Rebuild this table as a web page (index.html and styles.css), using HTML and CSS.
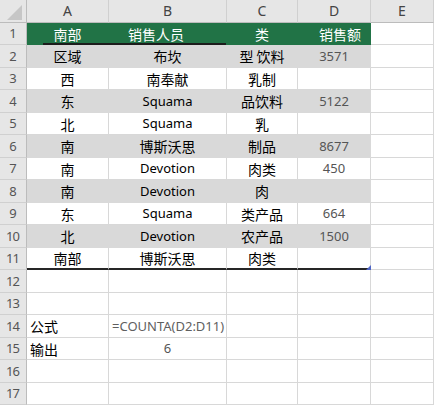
FILE: index.html
```html
<!DOCTYPE html>
<html lang="zh">
<head>
<meta charset="utf-8">
<title>COUNTA</title>
<link rel="stylesheet" href="styles.css">
</head>
<body>
<div class="sheet">
  <div class="row colh h23">
    <div class="cell corner"><svg width="26" height="22" viewBox="0 0 26 22"><polygon points="7,20 22,20 22,5" fill="#c6c6c6"/></svg></div>
    <div class="cell">A</div>
    <div class="cell">B</div>
    <div class="cell">C</div>
    <div class="cell">D</div>
    <div class="cell">E</div>
  </div>

  <div class="row green h22">
    <div class="cell rn">1</div>
    <div class="cell fill zh uline-a">南部</div>
    <div class="cell fill zh left hdr-b uline-b">销售人员</div>
    <div class="cell fill zh">类</div>
    <div class="cell fill zh right hdr-d">销售额</div>
    <div class="cell"></div>
  </div>

  <div class="row gray h23">
    <div class="cell rn">2</div>
    <div class="cell fill zh">区域</div>
    <div class="cell fill zh">布坎</div>
    <div class="cell fill zh">型 饮料</div>
    <div class="cell fill num">3571</div>
    <div class="cell"></div>
  </div>

  <div class="row plain h22">
    <div class="cell rn">3</div>
    <div class="cell fill zh">西</div>
    <div class="cell fill zh">南奉献</div>
    <div class="cell fill zh">乳制</div>
    <div class="cell fill num"></div>
    <div class="cell"></div>
  </div>

  <div class="row gray h23">
    <div class="cell rn">4</div>
    <div class="cell fill zh">东</div>
    <div class="cell fill">Squama</div>
    <div class="cell fill zh">品饮料</div>
    <div class="cell fill num">5122</div>
    <div class="cell"></div>
  </div>

  <div class="row plain h22">
    <div class="cell rn">5</div>
    <div class="cell fill zh">北</div>
    <div class="cell fill">Squama</div>
    <div class="cell fill zh">乳</div>
    <div class="cell fill num"></div>
    <div class="cell"></div>
  </div>

  <div class="row gray h23">
    <div class="cell rn">6</div>
    <div class="cell fill zh">南</div>
    <div class="cell fill zh">博斯沃思</div>
    <div class="cell fill zh">制品</div>
    <div class="cell fill num">8677</div>
    <div class="cell"></div>
  </div>

  <div class="row plain h22">
    <div class="cell rn">7</div>
    <div class="cell fill zh">南</div>
    <div class="cell fill">Devotion</div>
    <div class="cell fill zh">肉类</div>
    <div class="cell fill num">450</div>
    <div class="cell"></div>
  </div>

  <div class="row gray h23">
    <div class="cell rn">8</div>
    <div class="cell fill zh">南</div>
    <div class="cell fill">Devotion</div>
    <div class="cell fill zh">肉</div>
    <div class="cell fill num"></div>
    <div class="cell"></div>
  </div>

  <div class="row plain h22">
    <div class="cell rn">9</div>
    <div class="cell fill zh">东</div>
    <div class="cell fill">Squama</div>
    <div class="cell fill zh">类产品</div>
    <div class="cell fill num">664</div>
    <div class="cell"></div>
  </div>

  <div class="row gray h23">
    <div class="cell rn">10</div>
    <div class="cell fill zh">北</div>
    <div class="cell fill">Devotion</div>
    <div class="cell fill zh">农产品</div>
    <div class="cell fill num">1500</div>
    <div class="cell"></div>
  </div>

  <div class="row plain last h22">
    <div class="cell rn">11</div>
    <div class="cell fill zh">南部</div>
    <div class="cell fill zh">博斯沃思</div>
    <div class="cell fill zh">肉类</div>
    <div class="cell fill num handle"></div>
    <div class="cell"></div>
  </div>

  <div class="row h23">
    <div class="cell rn">12</div>
    <div class="cell"></div>
    <div class="cell"></div>
    <div class="cell"></div>
    <div class="cell"></div>
    <div class="cell"></div>
  </div>

  <div class="row h22">
    <div class="cell rn">13</div>
    <div class="cell"></div>
    <div class="cell"></div>
    <div class="cell"></div>
    <div class="cell"></div>
    <div class="cell"></div>
  </div>

  <div class="row h23">
    <div class="cell rn">14</div>
    <div class="cell zh left">公式</div>
    <div class="cell num left formula">=COUNTA(D2:D11)</div>
    <div class="cell"></div>
    <div class="cell"></div>
    <div class="cell"></div>
  </div>

  <div class="row h22">
    <div class="cell rn">15</div>
    <div class="cell zh left">输出</div>
    <div class="cell num">6</div>
    <div class="cell"></div>
    <div class="cell"></div>
    <div class="cell"></div>
  </div>

  <div class="row h23">
    <div class="cell rn">16</div>
    <div class="cell"></div>
    <div class="cell"></div>
    <div class="cell"></div>
    <div class="cell"></div>
    <div class="cell"></div>
  </div>

  <div class="row h22">
    <div class="cell rn">17</div>
    <div class="cell"></div>
    <div class="cell"></div>
    <div class="cell"></div>
    <div class="cell"></div>
    <div class="cell"></div>
  </div>
</div>
</body>
</html>
```

FILE: styles.css
```css
html, body {
  margin: 0;
  padding: 0;
  background: #ffffff;
}

body {
  font-family: "Noto Sans", "Noto Sans CJK SC", sans-serif;
}

.sheet {
  width: 434px;
}

.row {
  display: grid;
  grid-template-columns: 27px 82px 118px 71px 73px 63px;
}

.h22 { height: 22px; }
.h23 { height: 23px; }

.cell {
  position: relative;
  box-sizing: border-box;
  border-right: 1px solid #d8d8d8;
  border-bottom: 1px solid #d8d8d8;
  display: flex;
  align-items: center;
  justify-content: center;
  font-size: 13px;
  line-height: 1;
  color: #000;
  white-space: nowrap;
  overflow: visible;
}

.zh {
  font-family: "Noto Sans CJK SC", sans-serif;
  font-size: 14px;
}

.num {
  color: #555555;
}

.left {
  justify-content: flex-start;
  padding-left: 3px;
}

.right {
  justify-content: flex-end;
}

.formula {
  color: #5f5f5f;
}

/* headers */
.colh .cell {
  background: #e6e6e6;
  border-bottom-color: #bcbcbc;
  border-right-color: #d0d0d0;
  color: #444;
  font-size: 14px;
}

.colh .corner {
  border-right-color: #bcbcbc;
  align-items: stretch;
  justify-content: stretch;
}

.rn {
  background: #e6e6e6;
  border-right-color: #bcbcbc;
  border-bottom-color: #d0d0d0;
  color: #555;
  font-size: 13px;
  letter-spacing: -1px;
  padding-right: 1px;
}

/* banded table */
.green .fill {
  background: #217346;
  border-color: #217346;
  color: #ffffff;
}

.gray .fill {
  background: #d9d9d9;
  border-color: #d9d9d9;
}

.hdr-b {
  padding-left: 19px;
}

.hdr-d {
  padding-right: 9px;
}

.uline-a::after,
.uline-b::after {
  content: "";
  position: absolute;
  bottom: -1px;
  height: 2px;
  background: #1c1c1c;
}

.uline-a::after {
  left: 16px;
  right: -1px;
}

.uline-b::after {
  left: 0;
  right: 0;
}

.last .fill {
  border-bottom: 2px solid #262626;
}

.handle::after {
  content: "";
  position: absolute;
  right: -1px;
  bottom: -2px;
  width: 0;
  height: 0;
  border-left: 5px solid transparent;
  border-bottom: 5px solid #4f66c6;
}
```
